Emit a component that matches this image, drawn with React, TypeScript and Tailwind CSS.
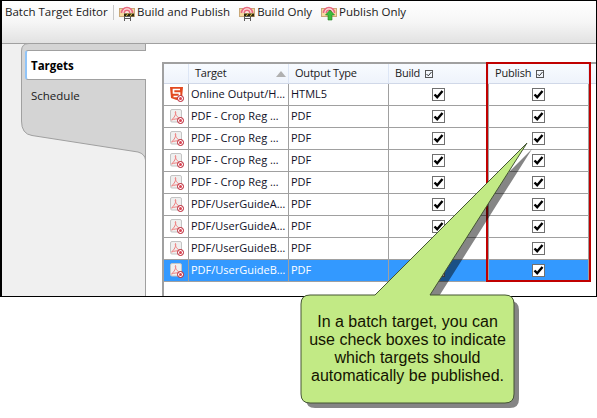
import React from 'react';

const rows = [
  { name: 'Online Output/H…', type: 'HTML5', html: true },
  { name: 'PDF - Crop Reg …', type: 'PDF' },
  { name: 'PDF - Crop Reg …', type: 'PDF' },
  { name: 'PDF - Crop Reg …', type: 'PDF' },
  { name: 'PDF - Crop Reg …', type: 'PDF' },
  { name: 'PDF/UserGuideA…', type: 'PDF' },
  { name: 'PDF/UserGuideA…', type: 'PDF' },
  { name: 'PDF/UserGuideB…', type: 'PDF' },
  { name: 'PDF/UserGuideB…', type: 'PDF', selected: true },
];

const Check = () => (
  <div className="w-[13px] h-[13px] border border-[#707070] bg-white flex items-center justify-center">
    <svg width="11" height="11" viewBox="0 0 11 11">
      <path d="M1.5 5.5 L4.2 8.2 L9.5 2" fill="none" stroke="#000" strokeWidth="2.4" />
    </svg>
  </div>
);

const Target = () => (
  <span className="absolute right-0 bottom-[1px] w-[7px] h-[7px] rounded-full border border-[#b81828] bg-white flex items-center justify-center">
    <span className="w-[3px] h-[3px] rounded-full bg-[#d84050]" />
  </span>
);

const RowIcon = ({ html }: { html?: boolean }) => (
  <div className="relative w-[16px] h-[16px]">
    {html ? (
      <svg width="16" height="16" viewBox="0 0 16 16" className="absolute left-0 top-[-1px]">
        <path d="M2 1 H15 L14 12 L8.5 14 L3 12 Z" fill="#e2491f" />
        <path d="M12 3.5 H5.5 V7 H11.5 V10.5 H5.5" fill="none" stroke="#fff" strokeWidth="1.7" />
      </svg>
    ) : (
      <svg width="16" height="16" viewBox="0 0 16 16">
        <rect x="2.5" y="0.5" width="11" height="12.5" rx="1.5" fill="#efefef" stroke="#c4c4c4" />
        <path d="M3.5 11 C6 9 8.5 5 7.5 2.5 C6.5 4 9 9 13 10 C9.5 9.5 6 10 3.5 11 Z" fill="none" stroke="#f08080" strokeWidth="1" />
      </svg>
    )}
    <Target />
  </div>
);

const BuildIcon = ({ variant }: { variant: 'both' | 'build' | 'publish' }) => (
  <svg width="16" height="17" viewBox="0 0 16 17" className="shrink-0">
    <rect x="0.5" y="4.5" width="15" height="8" fill="#f5d9a0" stroke="#c9a878" />
    <path d="M2.5 9 A5.5 5.5 0 0 1 13.5 9 Z" fill="#fbe8e0" />
    <path d="M2.5 9 A5.5 5.5 0 0 1 13.5 9" fill="none" stroke="#ea6a80" strokeWidth="1.7" />
    <path d="M5.2 9 A2.8 2.8 0 0 1 10.8 9" fill="none" stroke="#ea6a80" strokeWidth="1.5" />
    {variant !== 'publish' ? (
      <>
        <rect x="5" y="9.5" width="10" height="3" fill="#2f2a10" />
        <path d="M7 12.5 L9 9.5 M11 12.5 L13 9.5" stroke="#e8c840" strokeWidth="1" />
        <path d="M5.5 17 V12.5 H11.5 V17 M5.5 14.5 H11.5" fill="none" stroke="#5a5a5a" />
      </>
    ) : (
      <path d="M9 6 L13.5 11 H11 V16 H7 V11 H4.5 Z" fill="#3cbc3c" stroke="#1f7f1f" strokeWidth="0.6" />
    )}
  </svg>
);

const ToolButton = ({ label, variant }: { label: string; variant: 'both' | 'build' | 'publish' }) => (
  <div className="flex items-center gap-[2px]">
    <BuildIcon variant={variant} />
    <span className="mb-[2px]">{label}</span>
  </div>
);

const TinyCheck = () => (
  <span className="inline-flex w-[8px] h-[8px] border border-[#555] ml-[5px] items-center justify-center">
    <svg width="6" height="6" viewBox="0 0 6 6">
      <path d="M0.5 3 L2.3 4.8 L5.5 1" fill="none" stroke="#333" strokeWidth="1" />
    </svg>
  </span>
);

const App: React.FC = () => {
  return (
    <div className="relative w-[597px] h-[418px] bg-white overflow-hidden text-[11px] text-[#101028] font-['Open_Sans',sans-serif]">
      <div className="h-[297px] border-t border-b border-l-2 border-r border-black flex flex-col">
        {/* Toolbar */}
        <div className="h-[43px] shrink-0 bg-gradient-to-b from-white via-[#f6f6f6] to-[#e2e2e2] border-b border-[#a0a0a0] flex items-start pt-[3px] pl-[3px] text-[#202020] text-[11.5px]">
          <span className="h-[15px] flex items-center w-[105px]">Batch Target Editor</span>
          <div className="w-px h-[15px] bg-[#c8c8c8] mt-px mr-[5px] ml-[3px]" />
          <div className="flex items-center gap-[9px] h-[17px]">
            <ToolButton label="Build and Publish" variant="both" />
            <ToolButton label="Build Only" variant="build" />
            <ToolButton label="Publish Only" variant="publish" />
          </div>
        </div>

        <div className="flex-1 flex min-h-0">
          {/* Side tabs */}
          <div className="w-[144px] shrink-0 bg-[#f0f0f0] border-r border-[#a0a0a0] relative text-[11.5px]">
            <svg width="144" height="120" viewBox="0 0 144 120" className="absolute left-0 top-[-1px]">
              <path
                d="M19.5 8 Q19.5 0.5 27 0.5 H143.5 V117 Q143 111 136 109 L30 92.5 Q19.5 91 19.5 78 Z"
                fill="#d4d4d4"
                stroke="#a0a0a0"
              />
            </svg>
            <div className="relative ml-[23px] mt-[6px] w-[121px] h-[30px] bg-white border-y border-[#a0a0a0] border-l-2 border-l-[#90c4f8] rounded-l-[3px] font-bold flex items-center pl-[4px] pt-[2px] text-black">
              Targets
            </div>
            <div className="relative ml-[29px] mt-[7px] text-[#202020]">Schedule</div>
          </div>

          {/* Grid */}
          <div className="flex-1 bg-white pl-[16px] pt-[18px] overflow-hidden">
            <div className="w-[440px] border-t-2 border-l-2 border-[#a0a0a0] h-[300px]">
              <div className="h-[20px] flex bg-gradient-to-b from-[#f8fbff] to-[#eef3fb] border-b border-[#d0d8e8] text-[#202020] tracking-[-0.2px]">
                <div className="w-[25px] border-r border-[#dde6f5]" />
                <div className="w-[100px] border-r border-[#dde6f5] pl-[6px] flex items-center relative">
                  Target
                  <span className="absolute right-[2px] top-[7px] w-0 h-0 border-x-[5px] border-x-transparent border-b-[6px] border-b-[#b0b0b0]" />
                </div>
                <div className="w-[100px] border-r border-[#dde6f5] pl-[6px] flex items-center">Output Type</div>
                <div className="w-[100px] border-r border-[#dde6f5] pl-[6px] flex items-center">Build<TinyCheck /></div>
                <div className="w-[100px] border-r border-[#dde6f5] pl-[6px] flex items-center">Publish<TinyCheck /></div>
                <div className="flex-1" />
              </div>
              {rows.map((row, i) => (
                <div
                  key={i}
                  className={`w-[425px] h-[22px] flex border-b border-[#a0a0a0] ${row.selected ? 'bg-[#3399ff] text-white' : ''}`}
                >
                  <div className="w-[25px] border-r border-[#a0a0a0] flex items-center justify-center">
                    <RowIcon html={row.html} />
                  </div>
                  <div className="w-[100px] border-r border-[#a0a0a0] pl-[2px] flex items-center whitespace-nowrap">{row.name}</div>
                  <div className="w-[100px] border-r border-[#a0a0a0] pl-[2px] flex items-center">{row.type}</div>
                  <div className="w-[100px] border-r border-[#a0a0a0] flex items-center justify-center"><Check /></div>
                  <div className="w-[100px] border-r border-[#a0a0a0] flex items-center justify-center"><Check /></div>
                </div>
              ))}
            </div>
          </div>
        </div>
      </div>

      {/* Red highlight around the Publish column */}
      <div className="absolute left-[486px] top-[62px] w-[105px] h-[220px] border-2 border-[#c00000]" />

      {/* Callout */}
      <svg width="597" height="418" viewBox="0 0 597 418" className="absolute left-0 top-0">
        <path
          d="M380 301 L532 149 L436 301 H510 Q519 301 519 310 L519 399 Q519 408 510 408 H315 Q306 408 306 399 V310 Q306 301 315 301 Z"
          fill="#000"
          opacity="0.48"
        />
        <path
          d="M310 295 H375 L527 143 L430 295 H505 Q514 295 514 304 V394 Q514 403 505 403 H310 Q301 403 301 394 V304 Q301 295 310 295 Z"
          fill="#c2ea85"
          stroke="#445533"
          strokeWidth="1"
        />
      </svg>
      <div className="absolute left-[301px] top-[313px] w-[213px] text-center text-[16px] leading-[18px] text-[#141400] font-['Liberation_Sans',Arial,sans-serif]">
        In a batch target, you can
        <br />
        use check boxes to indicate
        <br />
        which targets should
        <br />
        automatically be published.
      </div>
    </div>
  );
};

export default App;
